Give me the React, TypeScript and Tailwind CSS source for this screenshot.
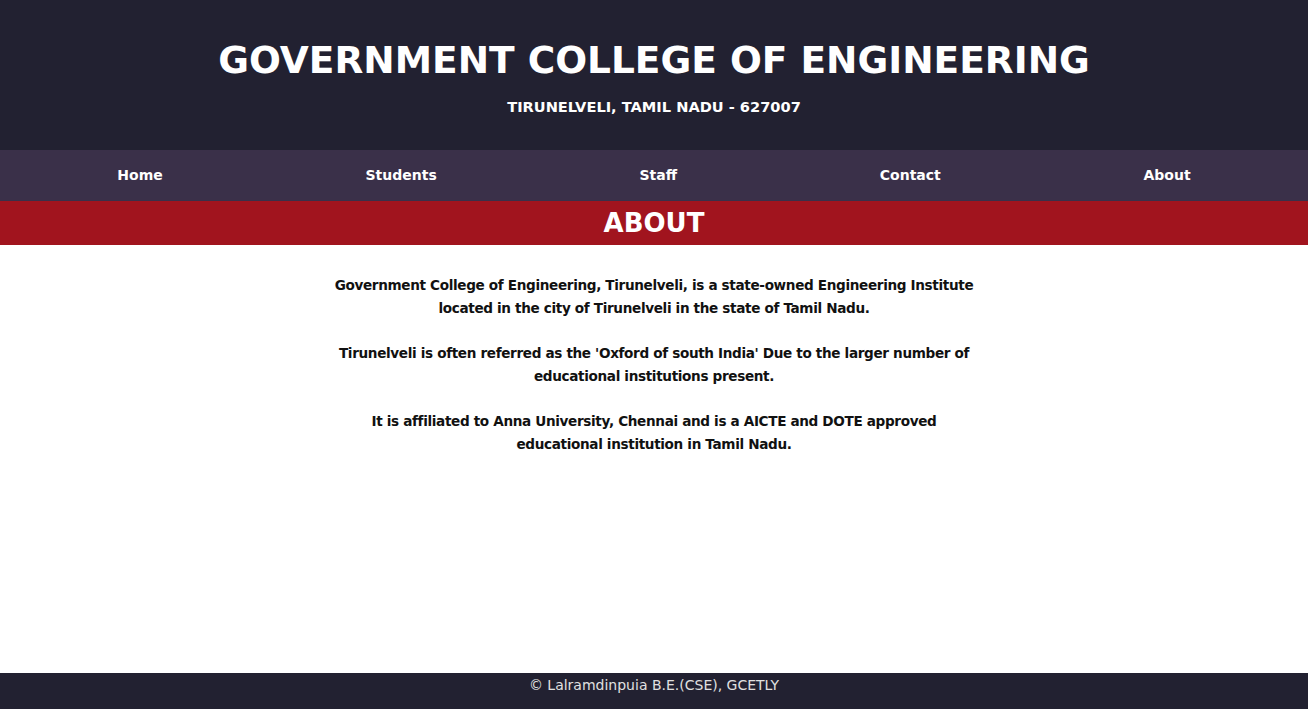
import React from "react";

const font = { fontFamily: '"DejaVu Sans", "Open Sans", sans-serif' };

export default function App() {
  const nav = ["Home", "Students", "Staff", "Contact", "About"];
  return (
    <div className="flex min-h-[709px] flex-col bg-white" style={font}>
      <header className="flex h-[150px] flex-col items-center bg-[#222131] pt-[36px] text-white">
        <h1 className="text-[37.5px] font-bold leading-[48px]">GOVERNMENT COLLEGE OF ENGINEERING</h1>
        <p className="mt-[11px] text-[14.6px] font-bold leading-[24px]">TIRUNELVELI, TAMIL NADU - 627007</p>
      </header>
      <nav className="flex h-[51px] items-center justify-around bg-[#3a3049] px-[16px] text-[14px] font-bold text-white">
        {nav.map((n) => (
          <a key={n}>{n}</a>
        ))}
      </nav>
      <div className="flex h-[44px] items-center justify-center bg-[#a1141e] text-[26px] font-bold text-white">ABOUT</div>
      <main className="flex flex-1 flex-col items-center pt-[29px]">
        <div className="w-[654px] text-center text-[13.6px] font-bold leading-[23px] tracking-[-0.35px] text-[#111]">
          <p className="mb-[22px]">Government College of Engineering, Tirunelveli, is a state-owned Engineering Institute located in the city of Tirunelveli in the state of Tamil Nadu.</p>
          <p className="mb-[22px]">Tirunelveli is often referred as the 'Oxford of south India' Due to the larger number of educational institutions present.</p>
          <p>It is affiliated to Anna University, Chennai and is a AICTE and DOTE approved educational institution in Tamil Nadu.</p>
        </div>
      </main>
      <footer className="flex h-[36px] justify-center bg-[#222131] pt-[1px] text-[14px] leading-[22px] text-[#e0e0e0]">
        © Lalramdinpuia B.E.(CSE), GCETLY
      </footer>
    </div>
  );
}
